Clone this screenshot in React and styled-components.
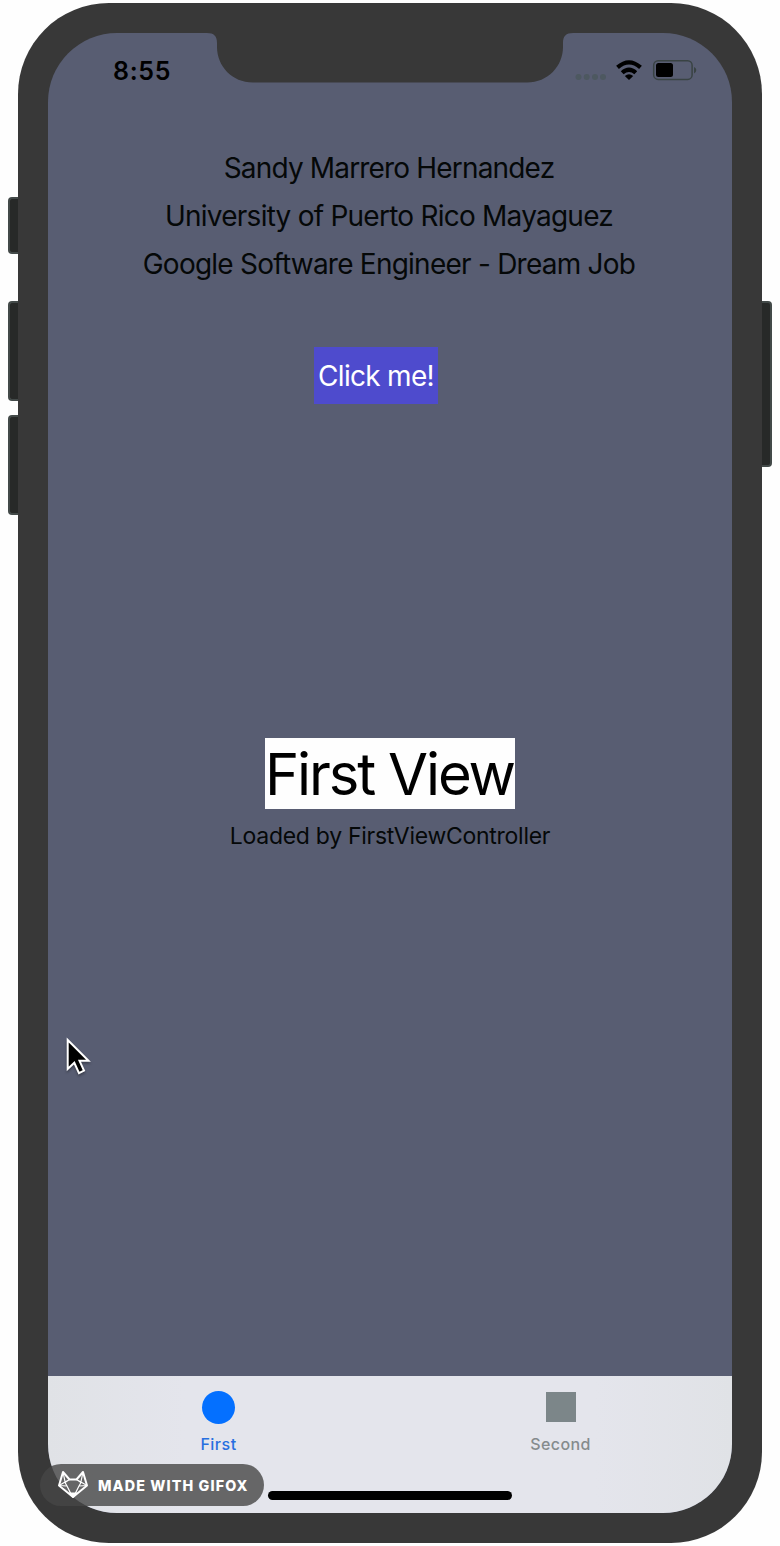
import React from "react";
import styled, { createGlobalStyle } from "styled-components";

const GlobalStyle = createGlobalStyle`
  body { margin: 0; background: #fefefe; font-family: Inter, "Liberation Sans", sans-serif; }
  * { box-sizing: border-box; }
`;

const Stage = styled.main`
  position: relative;
  display: flex;
  width: 780px;
  height: 1546px;
  padding: 3px 8px;
  overflow: hidden;
`;

const SideKeys = styled.div`
  display: flex;
  flex-direction: column;
  width: 10px;
  padding-top: ${(p) => p.$top}px;
`;

const Key = styled.div`
  height: ${(p) => p.$height}px;
  margin-bottom: ${(p) => p.$gap || 0}px;
  background: #272928;
  border: 2px solid #434a49;
  border-radius: ${(p) => (p.$right ? "0 4px 4px 0" : "4px 0 0 4px")};
  border-${(p) => (p.$right ? "left" : "right")}: 0;
`;

const Phone = styled.div`
  width: 744px;
  height: 1540px;
  padding: 30px;
  background: #383838;
  border-radius: 91px;
`;

const Screen = styled.div`
  display: flex;
  flex-direction: column;
  width: 684px;
  height: 1480px;
  overflow: hidden;
  background: #585d72;
  border-radius: 69px;
`;

const StatusBar = styled.header`
  display: grid;
  grid-template-columns: 159px 366px 159px;
  height: 72px;
`;

const Time = styled.div`
  padding: 22px 0 0 65px;
  font-size: 25px;
  line-height: 32px;
  font-weight: 600;
  letter-spacing: 0.7px;
  white-space: nowrap;
`;

const StatusIcons = styled.div`
  padding-top: 24px;
`;

const Intro = styled.section`
  display: flex;
  flex-direction: column;
  align-items: center;
  padding-top: 39px;
`;

const Line = styled.p`
  margin: 0;
  height: 48px;
  padding-right: 2px;
  font-size: 28px;
  line-height: 48px;
  letter-spacing: ${(p) => p.$spacing}px;
  white-space: nowrap;
  color: #050808;
`;

const ClickButton = styled.button`
  width: 124px;
  height: 57px;
  margin: 59px 28px 0 0;
  padding: 0;
  border: 0;
  background: #4e4bcd;
  color: #fff;
  font: 400 28px/59px Inter, sans-serif;
  letter-spacing: -0.7px;
  white-space: nowrap;
`;

const Center = styled.section`
  display: flex;
  flex: 1;
  flex-direction: column;
  align-items: center;
  padding-top: 334px;
`;

const Title = styled.h1`
  width: 250px;
  height: 71px;
  margin: 0;
  padding-right: 3px;
  background: #fefefe;
  color: #000;
  font-size: 58px;
  font-weight: 400;
  line-height: 73px;
  letter-spacing: -2.15px;
  text-align: center;
  white-space: nowrap;
`;

const Caption = styled.p`
  margin: 11px 0 0;
  font-size: 23px;
  line-height: 32px;
  letter-spacing: -0.28px;
  white-space: nowrap;
  color: #050808;
`;

const TabBar = styled.nav`
  height: 137px;
  background: linear-gradient(90deg, #e0e2e6, #e4e5ec 20%, #e4e5ec 80%, #e0e2e6);
`;

const Tabs = styled.div`
  display: grid;
  grid-template-columns: 1fr 1fr;
  height: 119px;
`;

const Tab = styled.div`
  display: flex;
  flex-direction: column;
  align-items: center;
  padding: 14px 1px 0 0;
  color: ${(p) => (p.$active ? "#276fe0" : "#858b8d")};
  font-size: 16px;
  font-weight: 500;
  letter-spacing: ${(p) => p.$spacing}px;
  line-height: 20px;
`;

const IconSlot = styled.div`
  display: flex;
  align-items: center;
  justify-content: center;
  height: 34px;
  margin-bottom: 10px;
`;

const Dot = styled.div`
  width: 33px;
  height: 33px;
  border-radius: 50%;
  background: #0470ff;
`;

const Square = styled.div`
  width: 30px;
  height: 30px;
  background: #7c8689;
`;

const HomeBar = styled.div`
  width: 244px;
  height: 9px;
  margin: -4px auto 0;
  border-radius: 5px;
  background: #000;
`;

const Badge = styled.div`
  position: absolute;
  left: 40px;
  top: 1464px;
  display: flex;
  align-items: center;
  width: 224px;
  height: 42px;
  padding-left: 17px;
  border-radius: 21px;
  background: rgba(70, 70, 70, 0.8);
  color: #fff;
  font-size: 14.3px;
  font-weight: 800;
  letter-spacing: 1.12px;
  white-space: nowrap;
`;

const BadgeText = styled.span`
  margin-left: 9px;
`;

const Pointer = styled.svg`
  position: absolute;
  left: 62px;
  top: 1034px;
  filter: drop-shadow(0 2px 1px rgba(0, 0, 0, 0.3));
`;

const Notch = () => (
  <svg width="366" height="50" viewBox="0 0 366 50">
    <path
      d="M0 0C7 0 10 3 10 10V14C10 33 25 49.5 46 49.5H320C341 49.5 356 33 356 14V10C356 3 359 0 366 0Z"
      fill="#383838"
    />
  </svg>
);

const Indicators = () => (
  <svg width="130" height="26" viewBox="573 57 130 26">
    <g fill="#4d5860">
      <circle cx="578.5" cy="77" r="3" />
      <circle cx="586.7" cy="77" r="3" />
      <circle cx="595" cy="77" r="3" />
      <circle cx="603" cy="77" r="3" />
    </g>
    <g fill="none" stroke="#000" strokeWidth="4.2">
      <path d="M617.5 67.4Q629 57.4 640.5 67.4" />
      <path d="M622.2 72.8Q629 66.6 635.8 72.8" />
    </g>
    <path d="M624.8 76Q629 72.3 633.2 76L629 80Z" fill="#000" />
    <rect x="653.7" y="60.8" width="38.4" height="18.6" rx="4.5" fill="none" stroke="#394343" strokeWidth="1.5" />
    <rect x="656" y="63" width="17" height="14" rx="2.5" fill="#000" />
    <path d="M694 67Q696.3 68 696.3 70T694 73.5Z" fill="#394343" />
  </svg>
);

const Fox = () => (
  <svg width="32" height="30" viewBox="57 1470 32 30" fill="none" stroke="#fff" strokeLinejoin="round">
    <path d="M63 1472L59 1485.5L73 1497L87 1485.5L83 1472L76.5 1479.5H69.5Z" strokeWidth="2" />
    <path
      d="M59 1485.5L69.5 1479.5M87 1485.5L76.5 1479.5M63 1472L65 1481.5M83 1472L81 1481.5M65 1482.5L69.5 1479.5H76.5L81 1482.5M65 1482.5L67 1486L72 1496M81 1482.5L79 1486L74 1496M59 1485.5L67 1486M87 1485.5L79 1486"
      strokeWidth="1.2"
    />
    <path d="M69 1493H77L73 1497.5Z" fill="#fff" />
  </svg>
);

export default function App() {
  return (
    <>
      <GlobalStyle />
      <Stage>
        <SideKeys $top={194}>
          <Key $height={57} $gap={47} />
          <Key $height={100} $gap={14} />
          <Key $height={100} />
        </SideKeys>
        <Phone>
          <Screen>
            <StatusBar>
              <Time>8:55</Time>
              <Notch />
              <StatusIcons>
                <Indicators />
              </StatusIcons>
            </StatusBar>
            <Intro>
              <Line $spacing={-0.83}>Sandy Marrero Hernandez</Line>
              <Line $spacing={-0.76}>University of Puerto Rico Mayaguez</Line>
              <Line $spacing={-0.76}>Google Software Engineer - Dream Job</Line>
              <ClickButton>Click me!</ClickButton>
            </Intro>
            <Center>
              <Title>First View</Title>
              <Caption>Loaded by FirstViewController</Caption>
            </Center>
            <TabBar>
              <Tabs>
                <Tab $active $spacing={0.5}>
                  <IconSlot><Dot /></IconSlot>
                  First
                </Tab>
                <Tab $spacing={0.4}>
                  <IconSlot><Square /></IconSlot>
                  Second
                </Tab>
              </Tabs>
              <HomeBar />
            </TabBar>
          </Screen>
        </Phone>
        <SideKeys $top={298}>
          <Key $height={166} $right />
        </SideKeys>
        <Pointer width="32" height="46" viewBox="62 1034 32 46">
          <path
            d="M67.7 1040V1069L74.3 1062.8L79 1073.2L84 1070.6L79.5 1060.8H88.5Z"
            fill="#000"
            stroke="#fff"
            strokeWidth="2"
          />
        </Pointer>
        <Badge>
          <Fox />
          <BadgeText>MADE WITH GIFOX</BadgeText>
        </Badge>
      </Stage>
    </>
  );
}
